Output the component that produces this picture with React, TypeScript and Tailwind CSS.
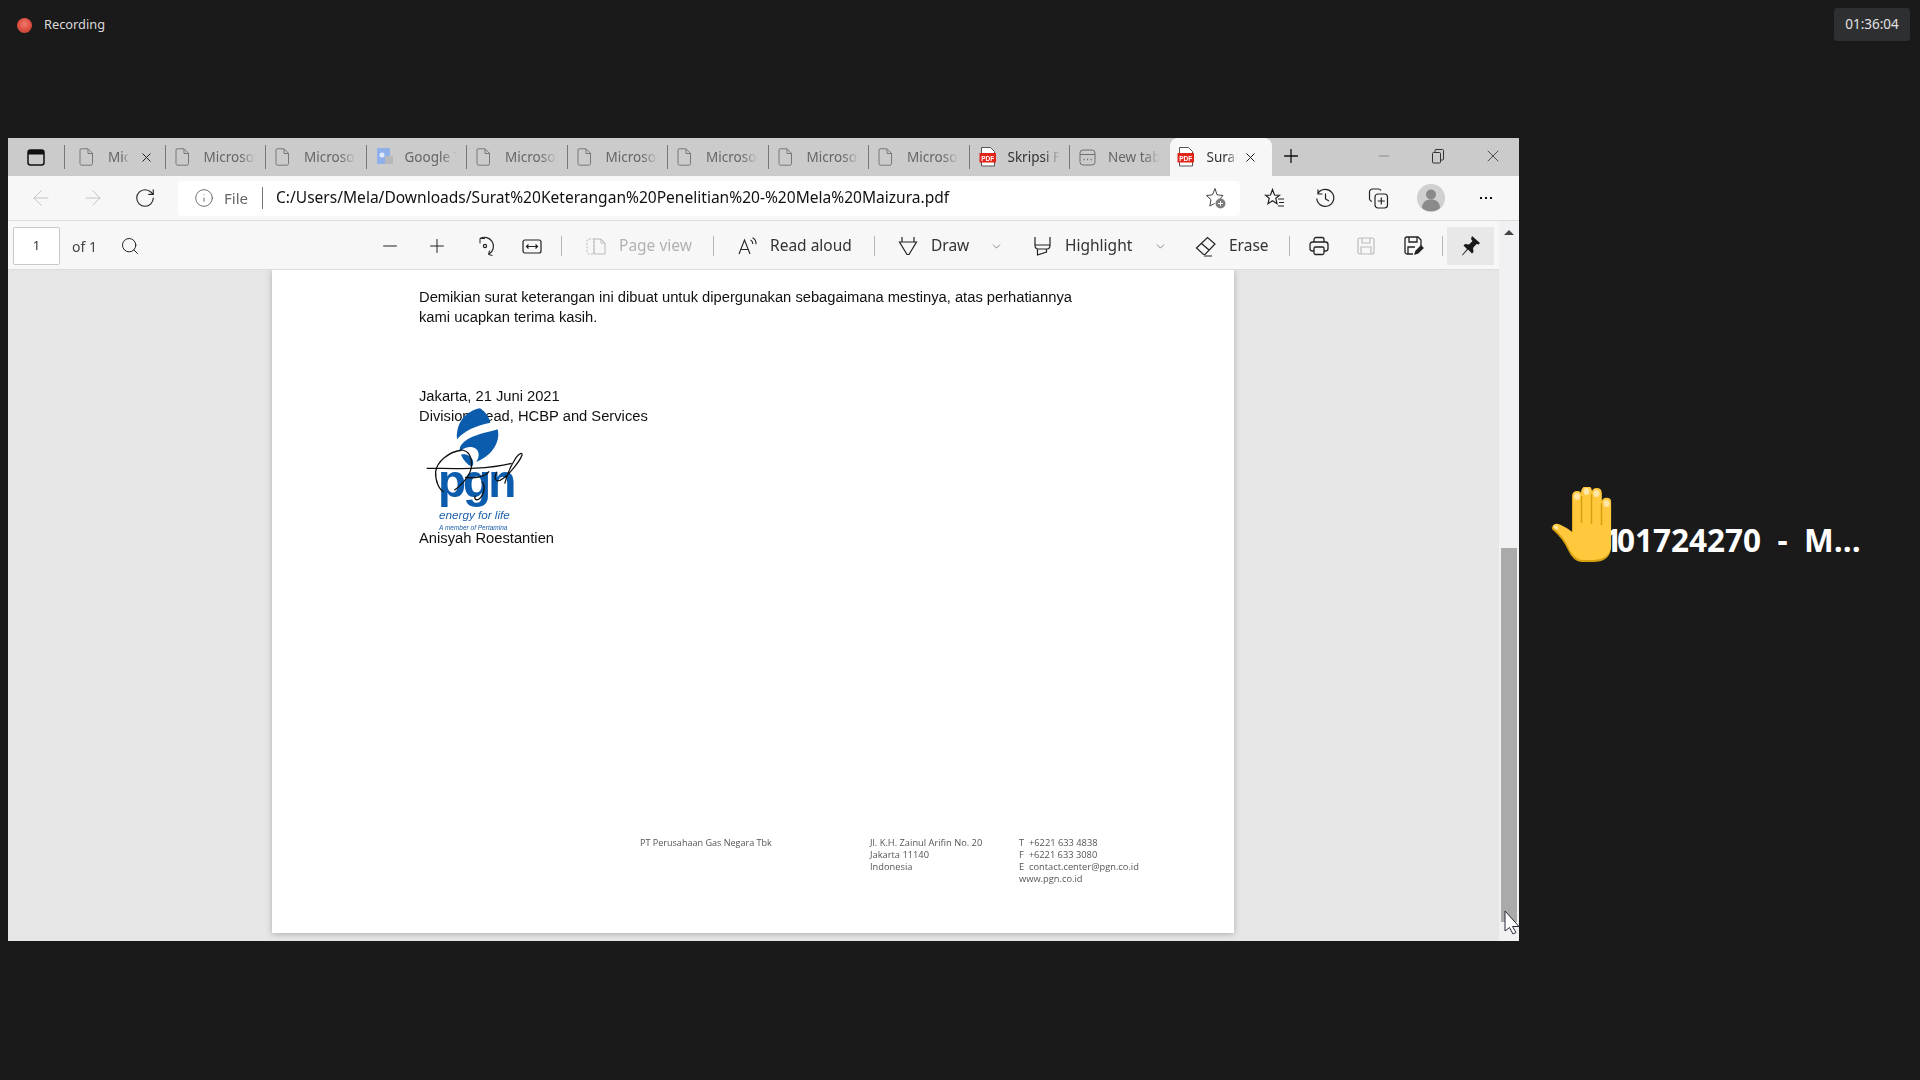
import React from "react";
import { ArrowLeft, ArrowRight, RotateCw, Info, X, Plus, Minus, Search, ChevronDown } from "lucide-react";

const ui = "font-['Noto_Sans',sans-serif]";

function DocIcon({ gray = true }: { gray?: boolean }) {
  return (
    <svg width="15" height="18" viewBox="0 0 15 18" fill="none" stroke={gray ? "#77767a" : "#444"} strokeWidth="1">
      <path d="M2 .8h7l4.500 4.500V15.500a1.700 1.700 0 0 1-1.700 1.700H2.700a1.700 1.700 0 0 1-1.700-1.700V2a1.200 1.200 0 0 1 1-1.200z" />
      <path d="M9 1v4.500h4.500" />
    </svg>
  );
}

function PdfIcon() {
  return (
    <svg width="18" height="20" viewBox="0 0 18 20">
      <path d="M2.500.5h9l4 4v14.500h-13z" fill="#fff" stroke="#555" strokeWidth="1" />
      <rect x="0.500" y="6" width="16.500" height="9.500" fill="#e1251b" />
      <text x="8.750" y="13.500" textAnchor="middle" fontSize="6.500" fontWeight="700" fill="#fff" fontFamily="Liberation Sans">PDF</text>
    </svg>
  );
}

function GoogleIcon() {
  return (
    <svg width="18" height="20" viewBox="0 0 18 20">
      <rect x="1" y="1" width="13" height="16" rx="1" fill="#8fb0e8" />
      <rect x="9" y="9" width="8" height="8" fill="#b8b8ba" />
      <circle cx="6" cy="8" r="2.500" fill="#dfe9fa" />
    </svg>
  );
}

function NewTabIcon() {
  return (
    <svg width="17" height="17" viewBox="0 0 17 17" fill="none" stroke="#6f6e72" strokeWidth="1">
      <rect x="1" y="1" width="15" height="15" rx="3" />
      <path d="M1 5.500h15" />
      <path d="M4.500 10.500h1.200M8 10.500h1.200M11.500 10.500h1.200" strokeWidth="1.400" />
    </svg>
  );
}

type TabProps = { label: string; icon: React.ReactNode; first?: boolean; dark?: boolean };

function Tab({ label, icon, first, dark }: TabProps) {
  return (
    <div className={`flex h-[24px] w-[100.5px] shrink-0 items-center border-l border-[#77767a] ${first ? "pl-[14px]" : "pl-[9px]"}`}>
      <span className="flex w-[20px] shrink-0 justify-start">{icon}</span>
      <span className={`ml-[9px] overflow-hidden whitespace-nowrap text-[13.500px] [mask-image:linear-gradient(to_right,black_70%,transparent)] ${first ? "w-[21px]" : "w-[52px]"} ${dark ? "text-[#333]" : "text-[#666]"}`}>
        {label}
      </span>
      {first && <X size={15} strokeWidth={1.600} className="ml-[10px] shrink-0 text-[#222]" />}
    </div>
  );
}

function TabBar() {
  return (
    <div className={`flex h-[38px] items-center bg-[#cccbcc] ${ui}`}>
      <div className="flex w-[56px] shrink-0 justify-center">
        <svg width="18" height="17" viewBox="0 0 18 17" fill="none">
          <rect x="1" y="1" width="16" height="15" rx="2.500" stroke="#111" strokeWidth="1.500" />
          <path d="M1 2.500a1.500 1.500 0 0 1 1.500-1.500h13a1.500 1.500 0 0 1 1.500 1.500V5.500H1z" fill="#111" />
        </svg>
      </div>
      <Tab first label="Microsoft" icon={<DocIcon />} />
      <Tab label="Microsoft Word" icon={<DocIcon />} />
      <Tab label="Microsoft Word" icon={<DocIcon />} />
      <Tab label="Google Translate" icon={<GoogleIcon />} />
      <Tab label="Microsoft Word" icon={<DocIcon />} />
      <Tab label="Microsoft Word" icon={<DocIcon />} />
      <Tab label="Microsoft Word" icon={<DocIcon />} />
      <Tab label="Microsoft Word" icon={<DocIcon />} />
      <Tab label="Microsoft Word" icon={<DocIcon />} />
      <Tab dark label="Skripsi Final" icon={<PdfIcon />} />
      <Tab label="New tab" icon={<NewTabIcon />} />
      <div className="flex h-[38px] w-[102px] shrink-0 items-center self-end rounded-t-[8px] bg-[#f7f7f7] pl-[7px]">
        <PdfIcon />
        <span className="ml-[12px] w-[30px] overflow-hidden whitespace-nowrap text-[13.500px] text-[#333] [mask-image:linear-gradient(to_right,black_70%,transparent)]">Surat</span>
        <X size={15} strokeWidth={1.600} className="ml-[6px] text-[#222]" />
      </div>
      <Plus size={22} strokeWidth={1.400} className="ml-[8px] -translate-y-px text-[#111]" />
      <Minus size={16} strokeWidth={1.100} className="ml-[74px] -translate-y-px text-[#777]" />
      <svg className="ml-[39px] -translate-y-px" width="14" height="15" viewBox="0 0 14 15" fill="none" stroke="#333" strokeWidth="1">
        <rect x="1.500" y="3.500" width="8" height="10.500" rx="1" />
        <path d="M4 3.500V1.500a1 1 0 0 1 1-1h6.500a1 1 0 0 1 1 1V10a1 1 0 0 1-1 1h-2" />
      </svg>
      <X size={20} strokeWidth={1} className="ml-[38px] -translate-y-px text-[#333]" />
    </div>
  );
}

function IconSlot({ width, children }: { width: number; children: React.ReactNode }) {
  return <div style={{ width }} className="flex shrink-0 items-center justify-center">{children}</div>;
}

function AddressRow() {
  return (
    <div className={`flex h-[45px] items-center border-b border-[#dcdcdc] bg-[#f7f7f7] ${ui}`}>
      <div className="flex w-[170px] shrink-0 items-center">
        <IconSlot width={66}><ArrowLeft size={24} strokeWidth={1} className="text-[#c4c4c4]" /></IconSlot>
        <IconSlot width={37}><ArrowRight size={24} strokeWidth={1} className="text-[#c4c4c4]" /></IconSlot>
        <IconSlot width={67}><RotateCw size={22} strokeWidth={1.200} className="text-[#222]" /></IconSlot>
      </div>
      <div className="flex h-[35px] w-[1062px] shrink-0 items-center rounded-[4px] bg-white">
        <Info size={20} strokeWidth={1} className="ml-[16px] text-[#555]" />
        <span className="ml-[10px] text-[15px] text-[#666]">File</span>
        <span className="ml-[14px] h-[22px] w-px bg-[#777]" />
        <span className="ml-[13px] whitespace-nowrap text-[15.560px] text-[#111]">C:/Users/Mela/Downloads/Surat%20Keterangan%20Penelitian%20-%20Mela%20Maizura.pdf</span>
        <svg className="ml-auto mr-[13px]" width="22" height="24" viewBox="0 0 22 24" fill="none" stroke="#444" strokeWidth="1">
          <path d="M14 14l4-4.500-6-.7L10 2.500 7.500 8.800 1.500 9.500l4.500 4.200-1.200 6.300L9.500 17.500" />
          <circle cx="15.500" cy="17.500" r="5" fill="#7d7d7d" stroke="none" />
          <path d="M15.500 15v5M13 17.500h5" stroke="#fff" />
        </svg>
      </div>
      <IconSlot width={68}>
        <svg width="21" height="20" viewBox="0 0 21 20" fill="none" stroke="#222" strokeWidth="1.200">
          <path d="M8.500 1.500l2 5.500 5 .3-3.700 3 1.200 5.500-4.500-3-4.500 3 1.200-5.500-3.700-3 5-.3z" />
          <path d="M14 11h6M15 14.500h5M14 18h6" />
        </svg>
      </IconSlot>
      <IconSlot width={34}>
        <svg width="21" height="21" viewBox="0 0 21 21" fill="none" stroke="#222" strokeWidth="1.200">
          <path d="M3 5.500a8.500 8.500 0 1 1-1.200 5" />
          <path d="M3 1.500v4.500h4.500M10.500 5.500v5.500l3.500 2" />
        </svg>
      </IconSlot>
      <IconSlot width={72}>
        <svg width="21" height="22" viewBox="0 0 21 22" fill="none" stroke="#222" strokeWidth="1.200">
          <rect x="7" y="7" width="12.500" height="14" rx="3" />
          <path d="M4 14.500A3 3 0 0 1 1.500 12V5a3 3 0 0 1 3-3h6a3 3 0 0 1 2.500 1.500" />
          <path d="M13.300 10.500v7M9.800 14h7" />
        </svg>
      </IconSlot>
      <IconSlot width={34}>
        <svg width="28" height="28" viewBox="0 0 28 28">
          <circle cx="14" cy="14" r="14" fill="#d1d0d1" />
          <circle cx="14" cy="10.500" r="5" fill="#8a8a8a" />
          <path d="M5 24c0-6 4-8.500 9-8.500s9 2.500 9 8.500a14 14 0 0 1-18 0z" fill="#8a8a8a" />
        </svg>
      </IconSlot>
      <IconSlot width={76}>
        <span className="flex gap-[3px]">
          <span className="h-[2px] w-[2px] bg-[#111]" />
          <span className="h-[2px] w-[2px] bg-[#111]" />
          <span className="h-[2px] w-[2px] bg-[#111]" />
        </span>
      </IconSlot>
    </div>
  );
}

function Sep({ className = "" }: { className?: string }) {
  return <span className={`h-[20px] w-px shrink-0 bg-[#b5b5b5] ${className}`} />;
}

function PdfToolbar() {
  return (
    <div className={`flex h-[49px] shrink-0 items-center border-b border-[#dcdcdc] bg-[#f7f7f7] pt-[2px] pl-[5px] text-[15.500px] text-[#333] ${ui}`}>
      <div className="flex h-[38px] w-[47px] shrink-0 items-center justify-center rounded-[2px] border border-[#c9c9c9] bg-white text-[13px]">1</div>
      <span className="ml-[12px] w-[26px] shrink-0 whitespace-nowrap text-[14px] text-[#444]">of 1</span>
      <IconSlot width={64}><Search size={20} strokeWidth={1.200} className="text-[#222]" /></IconSlot>
      <div className="w-[204px] shrink-0" />
      <IconSlot width={47.500}><Minus size={22} strokeWidth={1.100} className="text-[#222]" /></IconSlot>
      <IconSlot width={47.500}><Plus size={22} strokeWidth={1.100} className="text-[#222]" /></IconSlot>
      <IconSlot width={47.500}>
        <svg width="20" height="22" viewBox="0 0 20 22" fill="none" stroke="#222" strokeWidth="1.200">
          <path d="M5 3.500a8 8 0 1 1 9 15.500" />
          <path d="M5 8.500V3.500H10M14.500 15.500l-1 4 4 1" strokeWidth="1" />
          <circle cx="10" cy="11" r="1.600" />
        </svg>
      </IconSlot>
      <IconSlot width={47.500}>
        <svg width="20" height="15" viewBox="0 0 20 15" fill="none" stroke="#222" strokeWidth="1.200">
          <rect x="1" y="1" width="18" height="13" rx="2" />
          <path d="M4.500 7.500h11M6.500 5.500l-2 2 2 2M13.500 5.500l2 2-2 2" />
        </svg>
      </IconSlot>
      <Sep className="ml-[5px]" />
      <svg className="ml-[24px] shrink-0" width="20" height="17" viewBox="0 0 20 17" fill="none" stroke="#b9b9b9" strokeWidth="1">
        <path d="M3 1h5v15H3a2 2 0 0 1-2-2V3a2 2 0 0 1 2-2z" strokeDasharray="2 1.500" />
        <path d="M8 1h7l4 4v11H8zM15 1v4h4" />
      </svg>
      <span className="ml-[13px] w-[71px] shrink-0 whitespace-nowrap text-[#b2b2b2]">Page view</span>
      <Sep className="ml-[23px]" />
      <svg className="ml-[24px] shrink-0" width="20" height="18" viewBox="0 0 20 18" fill="none" stroke="#222" strokeWidth="1.100">
        <path d="M1 17L6.500 3 12 17M3 12.500h7" />
        <path d="M12.500 3c1.500.7 2.300 2 2.300 4M14.500 .8c2.500 1.200 3.700 3.500 3.500 6.500" />
      </svg>
      <span className="ml-[12px] w-[82px] shrink-0 whitespace-nowrap">Read aloud</span>
      <Sep className="ml-[22px]" />
      <svg className="ml-[23px] shrink-0" width="20" height="20" viewBox="0 0 20 20" fill="none" stroke="#222" strokeWidth="1.200">
        <path d="M1.500 6h17L11 18.500H9zM4 6V1M16 6V1" />
      </svg>
      <span className="ml-[13px] w-[37px] shrink-0 whitespace-nowrap">Draw</span>
      <ChevronDown size={13} strokeWidth={1.100} className="ml-[22px] shrink-0 text-[#444]" />
      <svg className="ml-[30px] shrink-0" width="19" height="20" viewBox="0 0 19 20" fill="none" stroke="#222" strokeWidth="1.200">
        <path d="M2 1v8h15V1M2 9c0 2.500 1 4 3 4h9c2 0 3-1.500 3-4M4.500 13v6l9-3v-3" />
      </svg>
      <span className="ml-[13px] w-[67px] shrink-0 whitespace-nowrap">Highlight</span>
      <ChevronDown size={13} strokeWidth={1.100} className="ml-[22px] shrink-0 text-[#444]" />
      <svg className="ml-[28px] shrink-0" width="22" height="22" viewBox="0 0 22 22" fill="none" stroke="#222" strokeWidth="1.200">
        <path d="M1.500 13L12.500 2.500 20 9 10 19.500H8.500zM6.500 8.500l7.500 6.500M9 21h8" />
      </svg>
      <span className="ml-[12px] w-[37px] shrink-0 whitespace-nowrap">Erase</span>
      <Sep className="ml-[23px]" />
      <IconSlot width={57}>
        <svg width="20" height="20" viewBox="0 0 20 20" fill="none" stroke="#222" strokeWidth="1.300">
          <path d="M5 6V3.500A2 2 0 0 1 7 1.500h6a2 2 0 0 1 2 2V6M5 15H3.500A2.500 2.500 0 0 1 1 12.500V8.500A2.500 2.500 0 0 1 3.500 6h13A2.500 2.500 0 0 1 19 8.500v4a2.500 2.500 0 0 1-2.500 2.500H15" />
          <rect x="5" y="11" width="10" height="7.500" rx="1.500" />
        </svg>
      </IconSlot>
      <IconSlot width={38}>
        <svg width="18" height="18" viewBox="0 0 18 18" fill="none" stroke="#bdbdbd" strokeWidth="1.200">
          <rect x="1" y="1" width="16" height="16" rx="2" />
          <path d="M5 1v5h8V1M4 17v-7h10v7" />
        </svg>
      </IconSlot>
      <IconSlot width={58}>
        <svg width="20" height="20" viewBox="0 0 20 20" fill="none" stroke="#222" strokeWidth="1.300">
          <path d="M9 18H3a2 2 0 0 1-2-2V3a2 2 0 0 1 2-2h11l3 3v6M5 1v5h8V1M4 18v-7h7" />
          <path d="M11 18l1-3 5-5 2 2-5 5z" fill="#222" />
        </svg>
      </IconSlot>
      <Sep className="ml-[-1px]" />
      <div className="ml-[4px] flex h-[38px] w-[47px] shrink-0 items-center justify-center bg-[#e8e8e8]">
        <svg width="20" height="22" viewBox="0 0 20 22" fill="#1a1a1a">
          <path d="M11 1l8 7-1.500 1.500-2-.5-3.500 4 .5 4-1.500 1.500-4-4L1.500 20.500 1 20l5-6-3.500-3.500L4 9l4 .5L11.500 6l-1.500-2z" />
        </svg>
      </div>
    </div>
  );
}

function PgnLogo() {
  return (
    <div className="absolute left-[6px] top-[-26px] h-[136px] w-[105px] font-['Liberation_Sans',sans-serif]">
      <svg className="absolute left-0 top-0" width="105" height="110" viewBox="0 0 315 330" fill="#0b5cad">
        <path d="M165 25C125 32 92 66 96 118 118 92 150 78 196 68 192 50 180 34 165 25z" />
        <path d="M218 88C180 100 130 105 108 136 104 142 104 150 104 154 124 138 148 136 158 152 164 164 160 174 154 186 196 170 228 130 218 88z" />
        <path d="M108 164c16-4 30 4 36 18 2 8 0 14-4 18-12-6-24-18-32-36z" />
      </svg>
      <span className="absolute left-[13px] top-[51px] text-[46px] leading-[60px] font-bold tracking-[-3px] text-[#0b5cad]">pgn</span>
      <svg className="absolute left-0 top-0" width="105" height="110" viewBox="0 0 315 330" fill="none" stroke="#111" strokeWidth="3.800">
        <path d="M5 205c80 0 165 6 255-15" />
        <path d="M112 150C70 155 36 185 32 215c-2 30 12 55 24 60" />
        <path d="M112 150c22 4 28 22 28 45-2 32-34 62-52 76" />
        <path d="M120 232c30 4 62-2 72-18" />
        <path d="M215 215c-10 24-2 30 10 26 26-12 62-62 66-76 2-8-8-6-18 8-14 22-28 52-34 78" />
        <path d="M170 245c14 12 6 42-8 52-10 6-16-2-10-10" />
      </svg>
      <span className="absolute left-[14px] top-[108px] whitespace-nowrap text-[11.700px] leading-[14px] italic text-[#1c5faa]">energy for life</span>
      <span className="absolute left-[14px] top-[124px] whitespace-nowrap text-[6.500px] leading-[8px] italic text-[#1c5faa]">A member of Pertamina</span>
    </div>
  );
}

function PdfPage() {
  return (
    <div className="ml-[264px] flex h-[663px] w-[962px] shrink-0 flex-col bg-white pt-[17px] pl-[147px] font-['Liberation_Sans',sans-serif] text-[14.730px] leading-[20px] text-[#111] shadow-[0_1px_6px_rgba(0,0,0,0.25)]">
      <p className="whitespace-nowrap">Demikian surat keterangan ini dibuat untuk dipergunakan sebagaimana mestinya, atas perhatiannya</p>
      <p>kami ucapkan terima kasih.</p>
      <p className="mt-[59px]">Jakarta, 21 Juni 2021</p>
      <p>Division Head, HCBP and Services</p>
      <div className="relative h-[102px]"><PgnLogo /></div>
      <p className="relative">Anisyah Roestantien</p>
      <div className="mt-auto mb-[48px] flex font-['Open_Sans',sans-serif] text-[9.300px] leading-[12px] text-[#555]">
        <div className="ml-[221px] w-[230px] text-[9.050px]">PT Perusahaan Gas Negara Tbk</div>
        <div className="w-[149px]">
          <p>Jl. K.H. Zainul Arifin No. 20</p>
          <p>Jakarta 11140</p>
          <p>Indonesia</p>
        </div>
        <div>
          <p>T&nbsp; +6221 633 4838</p>
          <p>F&nbsp; +6221 633 3080</p>
          <p>E&nbsp; contact.center@pgn.co.id</p>
          <p>www.pgn.co.id</p>
        </div>
      </div>
    </div>
  );
}

function Scrollbar() {
  return (
    <div className="relative flex w-[20px] shrink-0 flex-col items-center bg-[#f1f0f3]">
      <span className="mt-[9px] h-0 w-0 border-x-[5px] border-b-[5px] border-x-transparent border-b-[#444]" />
      <span className="mt-[313px] h-[374px] w-[16px] bg-[#aaaaaa]" />
      <svg className="absolute bottom-[5px] right-[-1px]" width="16" height="26" viewBox="0 0 16 26">
        <path d="M1 1v20l4.500-3.500L9 24l3-1.500-3.500-6H15z" fill="#fff" stroke="#2b2b3a" strokeWidth="1" />
      </svg>
    </div>
  );
}

const handPath =
  "M1 40Q3 37 8 39Q15 42 21 47V9Q21 5 25.500 5Q30 5 30 9V4.500Q31 0 35.500 0Q40 0 40.500 4.500V6.500Q41 2 45.500 2Q50 2 50.500 6.500V16Q51 12 55.500 12Q60 12 60 16V62Q58 75 42 75H30Q22 74 17 63Q12 52 3 44Q0 42 1 40z";

function RaisedHand() {
  return (
    <svg className="absolute left-[-48px] top-[-34px]" width="61" height="76" viewBox="0 0 61 76">
      <path d={handPath} fill="#d69f0e" />
      <path d={handPath} fill="#ffc83d" transform="translate(1 -1) scale(.985)" />
      <path d="M30.500 9V36M40.500 7V37M50.500 16V38" stroke="#d69f0e" strokeWidth="1.500" fill="none" />
      <ellipse cx="26" cy="9.500" rx="3" ry="3.500" fill="#ffe6a6" />
      <ellipse cx="35.500" cy="4.500" rx="3" ry="3.500" fill="#ffe6a6" />
      <ellipse cx="45.500" cy="6.500" rx="3" ry="3.500" fill="#ffe6a6" />
      <ellipse cx="55.500" cy="16.500" rx="3" ry="3.500" fill="#ffe6a6" />
      <ellipse cx="5" cy="40.500" rx="2.500" ry="1.600" fill="#ffe6a6" transform="rotate(30 5 40.500)" />
    </svg>
  );
}

export default function App() {
  return (
    <div className="flex h-screen w-full flex-col overflow-hidden bg-[#1a1a1a]">
      <header className={`flex h-[138px] shrink-0 items-start justify-between pt-[8px] pr-[10px] pl-[17px] ${ui}`}>
        <div className="flex h-[34px] items-center">
          <span className="h-[15px] w-[15px] rounded-full bg-[radial-gradient(circle_at_50%_40%,#f07a6c_0%,#d9483b_60%,#a85b55_100%)] blur-[0.5px]" />
          <span className="ml-[12px] text-[12.800px] text-[#d9d9d9]">Recording</span>
        </div>
        <div className="flex h-[33px] w-[76px] items-center justify-center rounded-[3px] bg-[#2e2f30] text-[13.500px] text-[#e2e2e2]">01:36:04</div>
      </header>
      <main className="flex min-h-0 flex-1 items-start pl-[8px]">
        <section className="flex h-[803px] w-[1511px] shrink-0 flex-col blur-[0.35px]">
          <TabBar />
          <AddressRow />
          <div className="flex min-h-0 flex-1">
            <div className="flex w-[1491px] shrink-0 flex-col">
              <PdfToolbar />
              <div className="flex min-h-0 flex-1 overflow-hidden bg-[#e6e6e6]"><PdfPage /></div>
            </div>
            <Scrollbar />
          </div>
        </section>
        <aside className="relative ml-[80px] mt-[383px]">
          <span className="whitespace-pre font-['Open_Sans',sans-serif] text-[31.500px] leading-[38px] font-bold text-white"><span className="relative left-[5px]">1</span>01724270  -  M...</span>
          <RaisedHand />
        </aside>
      </main>
    </div>
  );
}
